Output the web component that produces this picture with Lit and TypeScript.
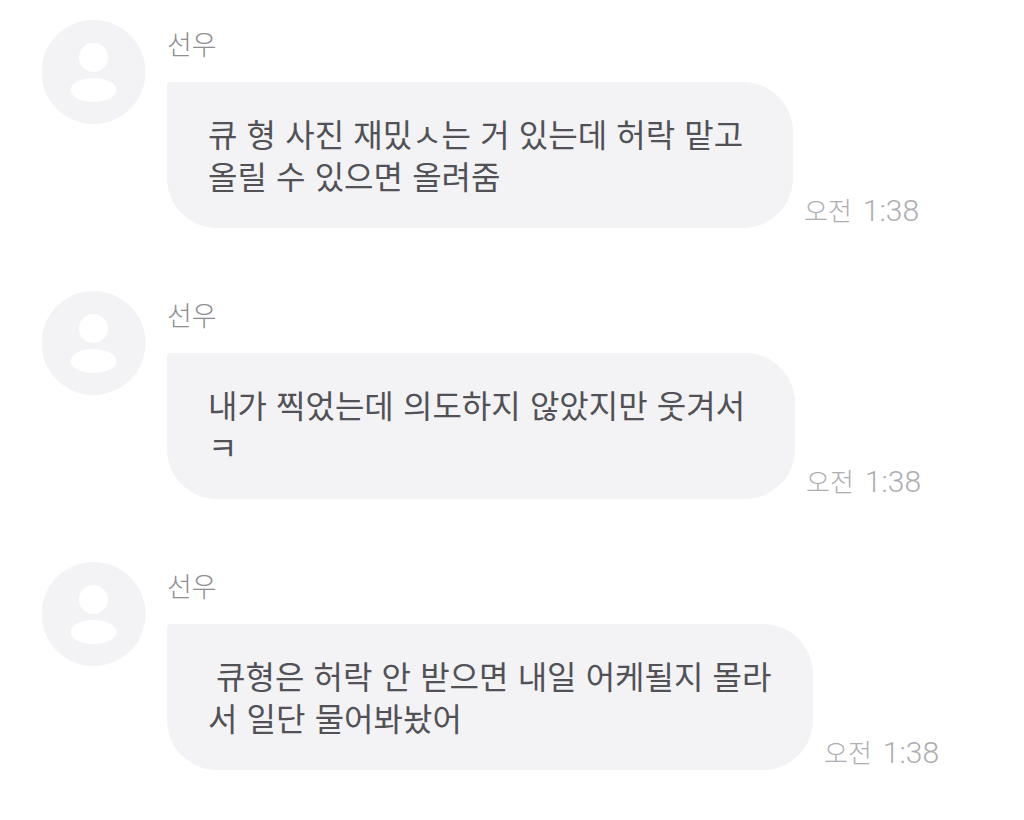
import { LitElement, html, css } from 'lit';
import { customElement } from 'lit/decorators.js';

const messages = [
  { lines: ['큐 형 사진 재밌ㅅ는 거 있는데 허락 맡고', '올릴 수 있으면 올려줌'], width: 626, indent: 0 },
  { lines: ['내가 찍었는데 의도하지 않았지만 웃겨서', 'ㅋ'], width: 628, indent: 0 },
  { lines: ['큐형은 허락 안 받으면 내일 어케될지 몰라', '서 일단 물어봐놨어'], width: 646, indent: 8 },
];

@customElement('app-root')
export class AppRoot extends LitElement {
  static styles = css`
    :host {
      display: block;
      background: #fff;
      height: 820px;
      overflow: hidden;
      font-family: 'Noto Sans CJK KR', sans-serif;
    }

    .list {
      display: flex;
      flex-direction: column;
      gap: 63px;
      padding: 20px 0 0 42px;
    }

    .message {
      display: flex;
      gap: 21px;
    }

    .avatar {
      width: 104px;
      height: 104px;
      flex: none;
    }

    .body {
      display: flex;
      flex-direction: column;
      gap: 13px;
    }

    .name {
      height: 49px;
      font-size: 27px;
      line-height: 48px;
      font-weight: 300;
      color: #8e8e93;
    }

    .row {
      display: flex;
      align-items: flex-end;
      gap: 11px;
    }

    .bubble {
      box-sizing: border-box;
      height: 146px;
      padding: 30px 0 0 41px;
      background: #f3f3f6;
      border-radius: 4px 50px 50px 50px;
      font-size: 32px;
      line-height: 42px;
      font-weight: 400;
      word-spacing: 2px;
      color: #515156;
      white-space: nowrap;
    }

    .line {
      display: block;
    }

    .time {
      display: flex;
      align-items: baseline;
      gap: 11px;
      padding-bottom: 1px;
      font-family: Roboto, sans-serif;
      font-size: 30px;
      font-weight: 300;
      line-height: 32px;
      color: #adadb2;
      white-space: nowrap;
    }

    .meridiem {
      font-family: 'Noto Sans CJK KR', sans-serif;
      font-size: 26px;
      font-weight: 300;
    }
  `;

  render() {
    return html`
      <div class="list">
        ${messages.map(
          (m) => html`
            <div class="message">
              <svg class="avatar" viewBox="0 0 104 104">
                <circle cx="51.5" cy="52" r="52" fill="#f3f3f6" />
                <circle cx="51.5" cy="37.5" r="14.5" fill="#fff" />
                <ellipse cx="51.5" cy="70" rx="23" ry="12" fill="#fff" />
              </svg>
              <div class="body">
                <div class="name">선우</div>
                <div class="row">
                  <div class="bubble" style="width: ${m.width}px">
                    ${m.lines.map(
                      (line, i) => html`<span class="line" style="margin-left: ${i === 0 ? m.indent : 0}px">${line}</span>`
                    )}
                  </div>
                  <div class="time"><span class="meridiem">오전</span><span>1:38</span></div>
                </div>
              </div>
            </div>
          `
        )}
      </div>
    `;
  }
}
